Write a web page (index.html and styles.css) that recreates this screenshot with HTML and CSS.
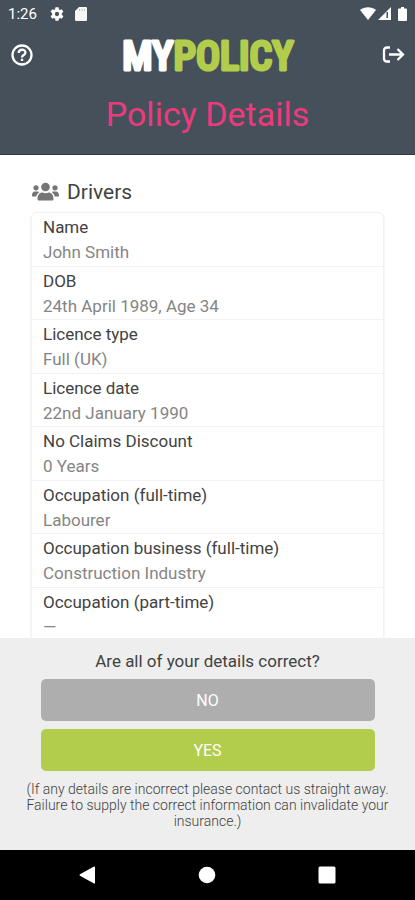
FILE: index.html
```html
<!DOCTYPE html>
<html lang="en">
<head>
  <meta charset="utf-8">
  <meta name="viewport" content="width=device-width, initial-scale=1">
  <title>Policy Details</title>
  <link rel="stylesheet" href="styles.css">
</head>
<body>
  <div class="app">
    <header class="header">
      <div class="status">
        <time class="clock">1:26</time>
        <svg width="16" height="16" viewBox="0 0 24 24" fill="currentColor" aria-hidden="true"><path fill-rule="evenodd" d="M9.700 2h4.600l.5 3 1.600.9 2.800-1.100 2.400 4-2.400 2v2.400l2.400 2-2.400 4-2.800-1.100-1.600.9-.5 3H9.700l-.5-3-1.600-.9-2.800 1.100-2.400-4 2.400-2v-2.400l-2.400-2 2.400-4 2.800 1.100 1.600-.9zM12 8.800a3.200 3.200 0 1 0 0 6.400 3.200 3.200 0 0 0 0-6.400z"/></svg>
        <svg class="sd" width="12" height="14" viewBox="0 0 12 14" aria-hidden="true"><path fill="#f5f5f5" d="M4 0h7a1 1 0 0 1 1 1v12a1 1 0 0 1-1 1H1a1 1 0 0 1-1-1V4z"/><path stroke="#b9bcc0" stroke-width="1" d="M4.500 2v2M7 2v2M9.500 2v2"/></svg>
        <div class="signals">
          <svg width="16" height="13" viewBox="0 0 16 13" aria-hidden="true"><path fill="#fff" d="M0 3C4.500-.8 11.500-.8 16 3L8 13z"/></svg>
          <svg width="13" height="13" viewBox="0 0 13 13" aria-hidden="true"><path fill="#fff" d="M13 0v13H0z"/><path fill="#46505a" d="M8.500 5H11v6H8.500z"/><path fill="#fff" d="M10 5h1v6h-1z"/></svg>
          <svg class="battery" width="9" height="14" viewBox="0 0 9 14" aria-hidden="true"><path fill="#fff" d="M3 0h3v1.500h2a1 1 0 0 1 1 1V13a1 1 0 0 1-1 1H1a1 1 0 0 1-1-1V2.500a1 1 0 0 1 1-1h2z"/></svg>
        </div>
      </div>
      <div class="bar">
        <button class="icon-button" type="button" aria-label="Help">
          <svg width="24" height="24" viewBox="0 0 24 24" fill="none" stroke="currentColor" stroke-width="2.300" aria-hidden="true"><circle cx="12" cy="12" r="9.500"/><path d="M8.700 10c0-4.300 6.700-4.300 6.700-.3 0 2.400-3.400 2.300-3.400 4.700"/><path d="M12 15.700v2.300"/></svg>
        </button>
        <svg class="logo" width="200" height="56" viewBox="0 0 200 56"><text x="100" y="43" text-anchor="middle"><tspan class="logo-my">MY</tspan><tspan class="logo-policy">POLICY</tspan></text></svg>
        <button class="icon-button" type="button" aria-label="Log out">
          <svg width="24" height="24" viewBox="0 0 24 24" fill="none" stroke="currentColor" stroke-width="2.300" aria-hidden="true"><path d="M9 4.500H6C4 4.500 3 5.500 3 7.500v8c0 2 1 3 3 3H9M8 11.500h14M16.500 6l5.500 5.500-5.500 5.500"/></svg>
        </button>
      </div>
      <h1 class="title">Policy Details</h1>
    </header>

    <main class="content">
      <h2 class="section-title">
        <svg width="28" height="20" viewBox="0 0 28 20" fill="currentColor" aria-hidden="true"><circle cx="14.500" cy="5" r="4.300"/><circle cx="5" cy="5.800" r="2.600"/><circle cx="24" cy="5.800" r="2.600"/><path d="M6.500 17c0-4.500 2.500-6.500 5-6.500 2 .9 4 .9 6 0 2.500 0 5 2 5 6.500 0 1-.6 1.500-1.500 1.500H8c-.9 0-1.500-.5-1.500-1.500zM2 14.500c-.6 0-1-.4-1-1 0-2.500 1.300-4 3-4h2.500c.7 0 1.300.2 1.800.6C6.800 11.300 5.800 12.600 5.300 14.500zM27 14.500c.6 0 1-.4 1-1 0-2.500-1.300-4-3-4h-2.500c-.7 0-1.300.2-1.800.6 1.500 1.200 2.500 2.500 3 4.400z"/></svg>
        Drivers
      </h2>
      <dl class="card">
        <div class="row"><dt>Name</dt><dd>John Smith</dd></div>
        <div class="row"><dt>DOB</dt><dd>24th April 1989, Age 34</dd></div>
        <div class="row"><dt>Licence type</dt><dd>Full (UK)</dd></div>
        <div class="row"><dt>Licence date</dt><dd>22nd January 1990</dd></div>
        <div class="row"><dt>No Claims Discount</dt><dd>0 Years</dd></div>
        <div class="row"><dt>Occupation (full-time)</dt><dd>Labourer</dd></div>
        <div class="row"><dt>Occupation business (full-time)</dt><dd>Construction Industry</dd></div>
        <div class="row"><dt>Occupation (part-time)</dt><dd>—</dd></div>
      </dl>
    </main>

    <section class="confirm">
      <p class="question">Are all of your details correct?</p>
      <button class="answer answer-no" type="button">NO</button>
      <button class="answer answer-yes" type="button">YES</button>
      <p class="note">(If any details are incorrect please contact us straight away. Failure to supply the correct information can invalidate your insurance.)</p>
    </section>

    <nav class="system-nav" aria-label="System">
      <button type="button" aria-label="Back"><svg width="18" height="18" viewBox="0 0 18 18" aria-hidden="true"><path fill="#fff" d="M16 1v16a.8.8 0 0 1-1 .5L1 9.700a.8.8 0 0 1 0-1.400L15 .5a.8.8 0 0 1 1 .5z"/></svg></button>
      <button type="button" aria-label="Home"><svg width="18" height="18" viewBox="0 0 18 18" aria-hidden="true"><circle cx="9" cy="9" r="8.300" fill="#fff"/></svg></button>
      <button type="button" aria-label="Recent apps"><svg width="18" height="18" viewBox="0 0 18 18" aria-hidden="true"><rect x=".5" y=".5" width="17" height="17" rx="1.500" fill="#fff"/></svg></button>
    </nav>
  </div>
</body>
</html>
```
FILE: styles.css
```css
* {
  box-sizing: border-box;
}

body {
  margin: 0;
  font-family: Roboto, "Liberation Sans", sans-serif;
  color: #424242;
  background: #fff;
}

h1, h2, p, dl, dd {
  margin: 0;
}

button {
  border: 0;
  padding: 0;
  background: none;
  color: inherit;
  font: inherit;
  cursor: pointer;
}

svg {
  display: block;
}

.app {
  display: flex;
  flex-direction: column;
  height: 100vh;
}

.header {
  flex: none;
  background: #46505a;
  border-bottom: 1px solid #2b3945;
  color: #fff;
}

.status {
  display: flex;
  align-items: center;
  gap: 12px;
  height: 27px;
  padding: 0 8px;
}

.clock {
  font-size: 15px;
}

.sd {
  margin-left: -2px;
}

.signals {
  display: flex;
  align-items: center;
  gap: 2px;
  margin-left: auto;
}

.battery {
  margin-left: 5px;
}

.bar {
  display: flex;
  align-items: center;
  justify-content: space-between;
  height: 56px;
  padding: 0 10px;
}

.logo {
  font-family: "Roboto Condensed", "Liberation Sans Narrow", "Liberation Sans", sans-serif;
  font-size: 40px;
  font-weight: 500;
  stroke-width: 3px;
  stroke-linejoin: round;
}

.logo-my {
  fill: #fff;
  stroke: #fff;
}

.logo-policy {
  fill: #b2cc4b;
  stroke: #b2cc4b;
}

.title {
  padding: 5px 0 13px;
  font-size: 34px;
  font-weight: 400;
  line-height: 53px;
  text-align: center;
  color: #ed3a7d;
}

.content {
  display: flex;
  flex-direction: column;
  flex: 1;
  min-height: 0;
  overflow-y: auto;
  scrollbar-width: none;
  padding: 22px 31px 0;
}

.section-title {
  display: flex;
  align-items: center;
  gap: 8px;
  margin-bottom: 5px;
  font-size: 21px;
  font-weight: 400;
  line-height: 30px;
}

.section-title svg {
  color: #757575;
}

.card {
  display: grid;
  flex: 1 0 auto;
  grid-auto-rows: 1fr;
  margin-bottom: -4px;
  border: 1px solid #f2f2f2;
  border-radius: 6px;
  box-shadow: 0 1px 2px rgba(0, 0, 0, 0.12);
}

.row {
  padding: 2px 11px 0;
  border-bottom: 1px solid #f2f2f2;
  font-size: 17px;
  line-height: 25px;
}

.row dd {
  color: #858585;
}

.confirm {
  flex: none;
  padding: 10px 20px 21px;
  background: #eee;
  text-align: center;
}

.question {
  font-size: 17px;
  line-height: 26px;
  margin-bottom: 5px;
}

.answer {
  display: block;
  width: calc(100% - 41px);
  height: 42px;
  margin: 0 auto 8px;
  border-radius: 5px;
  color: #fff;
  font-size: 16px;
}

.answer-no {
  background: #aeaeae;
}

.answer-yes {
  background: #b2cc4b;
}

.note {
  margin-top: 10px;
  font-size: 14px;
  font-weight: 300;
  line-height: 16px;
}

.system-nav {
  flex: none;
  display: flex;
  justify-content: space-around;
  align-items: center;
  height: 50px;
  padding: 0 28px;
  background: #000;
}
```
